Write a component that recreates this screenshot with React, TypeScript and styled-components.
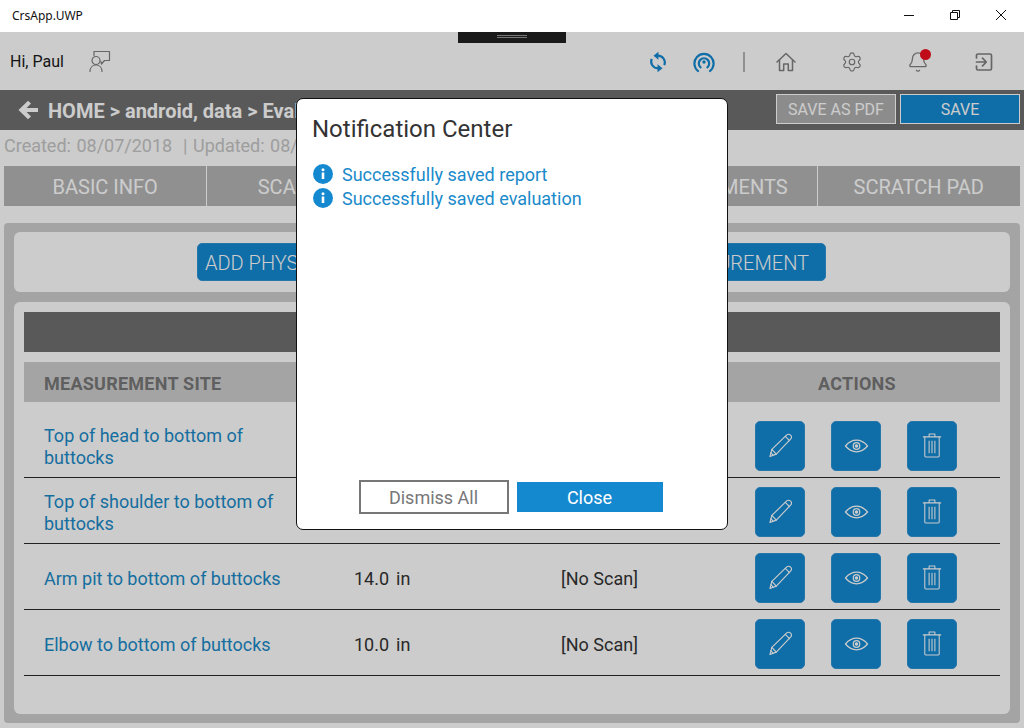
import React from "react";
import styled, { createGlobalStyle } from "styled-components";
import { Settings, Bell } from "lucide-react";

const Global = createGlobalStyle`
  html, body { margin: 0; padding: 0; height: 728px; overflow: hidden; background: #fff; }
  body { font-family: Roboto, "Liberation Sans", sans-serif; }
  * { box-sizing: border-box; }
`;

const Page = styled.div`
  width: 1024px; height: 728px; display: flex; flex-direction: column; position: relative; overflow: hidden; background: #fff;
`;
const TitleBar = styled.div`
  height: 32px; flex: none; display: flex; align-items: center; justify-content: space-between; background: #fff; position: relative; z-index: 3;
`;
const AppName = styled.span`
  font: 12px "Noto Sans", "Open Sans", sans-serif; color: #111; margin-left: 12px; position: relative; top: -1px;
`;
const WinControls = styled.div`display: flex;`;
const WinBtn = styled.div`
  width: 46px; height: 32px; display: flex; align-items: center; justify-content: center; color: #111; position: relative; top: -1px;
`;
const Body = styled.div`flex: 1; display: flex; flex-direction: column; position: relative; min-height: 0;`;
const Header = styled.div`height: 58px; flex: none; display: flex; align-items: center; padding-left: 10px; position: relative;`;
const Greeting = styled.span`font-size: 16px; color: #1a1a1a; margin-right: 25px;`;
const ToolArea = styled.div`margin-left: auto; display: flex; align-items: center; height: 100%; padding: 2px 7px 0 0;`;
const ToolIcon = styled.div<{ $w: number }>`
  width: ${(p) => p.$w}px; display: flex; align-items: center; justify-content: center; position: relative; color: #808080;
`;
const ToolDivider = styled.div`width: 2px; height: 20px; background: #b5b5b5; margin: 0 8px 0 16px;`;
const Dot = styled.span`
  position: absolute; width: 11px; height: 11px; border-radius: 50%; background: #f0101f; left: 35px; top: -2px;
`;
const Crumbs = styled.div`height: 40px; flex: none; background: #707070; display: flex; align-items: center; padding: 0 4px 0 18px;`;
const CrumbText = styled.span`font-size: 20px; font-weight: 700; color: #fff; margin-left: 10px; position: relative; top: 1px;`;
const CrumbActions = styled.div`margin-left: auto; display: flex; gap: 4px;`;
const SaveBtn = styled.button<{ $primary?: boolean }>`
  width: 120px; height: 30px; padding: 0; border: 1px solid #fff; border-radius: 0; font: 16px Roboto, sans-serif; color: #fff; position: relative; top: -1px;
  background: ${(p) => (p.$primary ? "#1389d2" : "#b0b0b0")};
`;
const Meta = styled.div`height: 36px; flex: none; display: flex; align-items: center; padding: 0 0 6px 4px; font-size: 18px; color: #c6c6c6; white-space: pre; word-spacing: 1px;`;
const Tabs = styled.div`height: 40px; flex: none; display: flex; gap: 1px; padding: 0 4px;`;
const Tab = styled.div<{ $shift?: number }>`
  flex: 0 0 202.4px; background: #b5b5b5; color: #fff; font-size: 20px; display: flex; align-items: center; justify-content: center; padding: 2px 0 0 ${(p) => p.$shift ?? 0}px;
`;
const Outer = styled.div`
  width: 1016px; height: 500px; flex: none; margin: 17px 4px 0; padding: 9px 10px; background: #cecece; border-radius: 4px; display: flex; flex-direction: column; gap: 10px;
`;
const ActionCard = styled.div`
  height: 60px; flex: none; background: #fff; border-radius: 6px; display: flex; justify-content: center; align-items: center; gap: 9px; padding-right: 1px;
`;
const AddBtn = styled.button<{ $align: string }>`
  width: 310px; height: 38px; padding: 1px 16px 0 7px; border: 1px solid #2f95d6; border-radius: 5px; background: #1389d2; color: #fff; font: 300 20px Roboto, sans-serif; white-space: nowrap; text-align: ${(p) => p.$align};
`;
const TableCard = styled.div`flex: 1; background: #fff; border-radius: 6px; padding: 10px;`;
const TableTitle = styled.div`height: 40px; background: #707070;`;
const Row = styled.div`
  display: grid; grid-template-columns: 330px 207px 151px 288px; align-items: center;
`;
const HeadRow = styled(Row)`
  height: 40px; margin-top: 10px; padding-top: 2px; background: #cecece; color: #777; font-size: 18px; font-weight: 700; letter-spacing: 0.25px;
`;
const HeadCell = styled.div<{ $center?: boolean }>`
  padding-left: ${(p) => (p.$center ? 2 : 20)}px; text-align: ${(p) => (p.$center ? "center" : "left")}; grid-column: ${(p) => (p.$center ? 4 : "auto")};
`;
const DataRow = styled(Row)<{ $first?: boolean }>`
  height: ${(p) => (p.$first ? 76 : 66)}px; padding-top: ${(p) => (p.$first ? 14 : 4)}px; border-bottom: 1px solid #2a2a2a;
`;
const Site = styled.a`font-size: 18px; line-height: 22px; color: #1a8ac8; padding-left: 20px; padding-right: 70px;`;
const Value = styled.div`font-size: 18px; color: #333; word-spacing: 2.5px;`;
const Scan = styled.div`font-size: 18px; color: #333;`;
const Buttons = styled.div`display: flex; gap: 26px; justify-content: center; margin-top: -2px;`;
const IconBtn = styled.div`
  width: 50px; height: 50px; background: #1389d2; border: 1px solid #2f95d6; border-radius: 5px; display: flex; align-items: center; justify-content: center; color: #fff;
`;
const Overlay = styled.div`
  position: absolute; inset: 0; background: rgba(0, 0, 0, 0.2); z-index: 1;
`;
const DevBar = styled.div`
  position: absolute; z-index: 2; top: 0; left: 458px; width: 108px; height: 11px; background: #1a1a1a; display: flex; justify-content: center; padding-top: 3px;
`;
const DevGrip = styled.div`width: 30px; height: 3px; border-top: 1px solid #777; border-bottom: 1px solid #777;`;
const Modal = styled.div`
  position: absolute; z-index: 2; left: 296px; top: 66px; width: 432px; height: 432px; background: #fff; border: 1.5px solid #111; border-radius: 7px;
  display: flex; flex-direction: column; padding: 15px 15px 15px;
`;
const ModalTitle = styled.div`font-size: 24px; line-height: 30px; color: #333;`;
const NoteList = styled.div`margin-top: 18px; flex: 1; display: flex; flex-direction: column;`;
const Note = styled.div`height: 24px; display: flex; align-items: center; gap: 9px; font-size: 18px; color: #1a8acb; padding-left: 1px;`;
const Footer = styled.div`display: flex; align-items: center; justify-content: center; gap: 8px; padding-right: 3px;`;
const Dismiss = styled.button`
  width: 150px; height: 34px; padding: 0; background: #fff; border: 2px solid #777; color: #777; font: 18px Roboto, sans-serif; border-radius: 0;
`;
const CloseBtn = styled.button`
  width: 146px; height: 30px; padding: 0; background: #1589d0; border: 0; color: #fff; font: 18px Roboto, sans-serif; border-radius: 0;
`;

const S = { fill: "none", stroke: "currentColor", strokeLinecap: "round", strokeLinejoin: "round" } as const;

const Persona = () => (
  <svg width="22" height="22" viewBox="0 0 22 22" {...S} strokeWidth="1.2" style={{ color: "#808080" }}>
    <path d="M5 5.500V1.500h15.500v9H15.500l-3 3.500-.6-2.500" />
    <circle cx="7" cy="10.500" r="4" />
    <path d="M1 21.500c0-3.800 2.500-6.500 6-6.500s6 2.700 6 6.500" />
  </svg>
);
const Sync = () => (
  <svg width="18" height="24" viewBox="0 0 20 24" fill="none" style={{ color: "#1389d2", transform: "scaleX(-1)" }}>
    <path d="M3 15.500A7.600 7.600 0 0 1 10 5h1" stroke="currentColor" strokeWidth="2.400" />
    <path d="M17 8.500A7.600 7.600 0 0 1 10 19H9" stroke="currentColor" strokeWidth="2.400" />
    <path d="M9.500 0.500 15 5l-5.500 4.500z M10.500 14.500 5 19l5.500 4.500z" fill="currentColor" />
  </svg>
);
const Broadcast = () => (
  <svg width="22" height="22" viewBox="0 0 22 22" {...S} strokeWidth="2.200" style={{ color: "#1389d2" }}>
    <path d="M5 20a9.600 9.600 0 1 1 12 0" />
    <path d="M7.600 16.400a5.200 5.200 0 1 1 6.800 0" />
    <circle cx="11" cy="11" r="1.700" fill="currentColor" stroke="none" />
  </svg>
);
const Home = () => (
  <svg width="20" height="20" viewBox="0 0 20 20" {...S} strokeWidth="1.500">
    <path d="M1 10 10 1.500 19 10" />
    <path d="M3.500 8v10.500h4.200v-6.500h4.600v6.500h4.200V8" />
  </svg>
);
const Exit = () => (
  <svg width="18" height="18" viewBox="0 0 18 18" {...S} strokeWidth="1.700">
    <path d="M1.500 5V2.500a1.500 1.500 0 0 1 1.500-1.500h12a1.500 1.500 0 0 1 1.500 1.500v13a1.500 1.500 0 0 1-1.500 1.500H3a1.500 1.500 0 0 1-1.500-1.500V13" />
    <path d="M1.500 9H11M7.500 5.200 11.300 9l-3.800 3.800" />
  </svg>
);
const Back = () => (
  <svg width="20" height="20" viewBox="0 0 20 20" fill="#fff">
    <path d="M10 0.800 13 3.600 8.600 8H20v4H8.600L13 16.400 10 19.200 0.500 10z" />
  </svg>
);
const PencilIcon = () => (
  <svg width="25" height="25" viewBox="0 0 26 26" {...S} strokeWidth="1.200">
    <path d="M2 24.500 4 17 19.500 2a2.800 2.800 0 0 1 4 .2 2.800 2.800 0 0 1 .2 4L8.600 22z" />
    <path d="M4 17 8.600 22M18 3.600l4.400 4.400M3 20.500l2.300 2.600" />
  </svg>
);
const EyeIcon = () => (
  <svg width="25" height="14" viewBox="0 0 26 14" {...S} strokeWidth="1.300">
    <path d="M1.500 7C5 3 8.800 1 13 1S21 3 24.500 7C21 11 17.200 13 13 13S5 11 1.500 7z" />
    <circle cx="13" cy="7" r="3.400" />
    <circle cx="13" cy="7" r="1.200" fill="currentColor" />
  </svg>
);
const TrashIcon = () => (
  <svg width="20" height="25" viewBox="0 0 20 26" {...S} strokeWidth="1.100" strokeLinecap="butt">
    <path d="M0.500 4h19M7 4V1h6v3" />
    <path d="M2.500 4v20a1 1 0 0 0 1 1h13a1 1 0 0 0 1-1V4" />
    <path d="M7 8v13M10 8v13M13 8v13" />
  </svg>
);
const InfoIcon = () => (
  <svg width="20" height="20" viewBox="0 0 20 20">
    <circle cx="10" cy="10" r="10" fill="#1589d0" />
    <circle cx="10" cy="5.800" r="1.500" fill="#fff" />
    <rect x="8.700" y="8.500" width="2.600" height="6.500" fill="#fff" />
  </svg>
);

const rows = [
  { site: "Top of head to bottom of buttocks", first: true },
  { site: "Top of shoulder to bottom of buttocks" },
  { site: "Arm pit to bottom of buttocks", value: "14.0 in", scan: "[No Scan]" },
  { site: "Elbow to bottom of buttocks", value: "10.0 in", scan: "[No Scan]" },
];

export default function App() {
  return (
    <Page>
      <Global />
      <TitleBar>
        <AppName>CrsApp.UWP</AppName>
        <WinControls>
          <WinBtn>
            <svg width="12" height="12" viewBox="0 0 12 12" fill="none" stroke="currentColor"><path d="M1 6.500h10" /></svg>
          </WinBtn>
          <WinBtn>
            <svg width="12" height="12" viewBox="0 0 12 12" fill="none" stroke="currentColor"><path d="M1.500 3.500h7v7h-7zM3.500 3.500v-2h7v7h-2" /></svg>
          </WinBtn>
          <WinBtn>
            <svg width="12" height="12" viewBox="0 0 12 12" fill="none" stroke="currentColor"><path d="M1 1l10 10M11 1 1 11" /></svg>
          </WinBtn>
        </WinControls>
      </TitleBar>
      <Body>
        <Header>
          <Greeting>Hi, Paul</Greeting>
          <Persona />
          <ToolArea>
            <ToolIcon $w={46}><Sync /></ToolIcon>
            <ToolIcon $w={46}><Broadcast /></ToolIcon>
            <ToolDivider />
            <ToolIcon $w={66}><Home /></ToolIcon>
            <ToolIcon $w={66}><Settings size={22} strokeWidth={1.3} /></ToolIcon>
            <ToolIcon $w={66}><Bell size={22} strokeWidth={1.4} /><Dot /></ToolIcon>
            <ToolIcon $w={66}><Exit /></ToolIcon>
          </ToolArea>
        </Header>
        <Crumbs>
          <Back />
          <CrumbText>HOME &gt; android, data &gt; Evaluation</CrumbText>
          <CrumbActions>
            <SaveBtn>SAVE AS PDF</SaveBtn>
            <SaveBtn $primary>SAVE</SaveBtn>
          </CrumbActions>
        </Crumbs>
        <Meta>{"Created: 08/07/2018  | Updated: 08/07/2018"}</Meta>
        <Tabs>
          <Tab>BASIC INFO</Tab>
          <Tab>SCAN INFO</Tab>
          <Tab />
          <Tab $shift={6}>ASSESSMENTS</Tab>
          <Tab>SCRATCH PAD</Tab>
        </Tabs>
        <Outer>
          <ActionCard>
            <AddBtn $align="left">ADD PHYSICAL MEASUREMENT</AddBtn>
            <AddBtn $align="right">ADD SCANNED MEASUREMENT</AddBtn>
          </ActionCard>
          <TableCard>
            <TableTitle />
            <HeadRow>
              <HeadCell>MEASUREMENT SITE</HeadCell>
              <HeadCell $center>ACTIONS</HeadCell>
            </HeadRow>
            {rows.map((r) => (
              <DataRow key={r.site} $first={r.first}>
                <Site>{r.site}</Site>
                <Value>{r.value}</Value>
                <Scan>{r.scan}</Scan>
                <Buttons>
                  <IconBtn><PencilIcon /></IconBtn>
                  <IconBtn><EyeIcon /></IconBtn>
                  <IconBtn><TrashIcon /></IconBtn>
                </Buttons>
              </DataRow>
            ))}
          </TableCard>
        </Outer>
        <Overlay />
        <DevBar><DevGrip /></DevBar>
        <Modal>
          <ModalTitle>Notification Center</ModalTitle>
          <NoteList>
            <Note><InfoIcon />Successfully saved report</Note>
            <Note><InfoIcon />Successfully saved evaluation</Note>
          </NoteList>
          <Footer>
            <Dismiss>Dismiss All</Dismiss>
            <CloseBtn>Close</CloseBtn>
          </Footer>
        </Modal>
      </Body>
    </Page>
  );
}
